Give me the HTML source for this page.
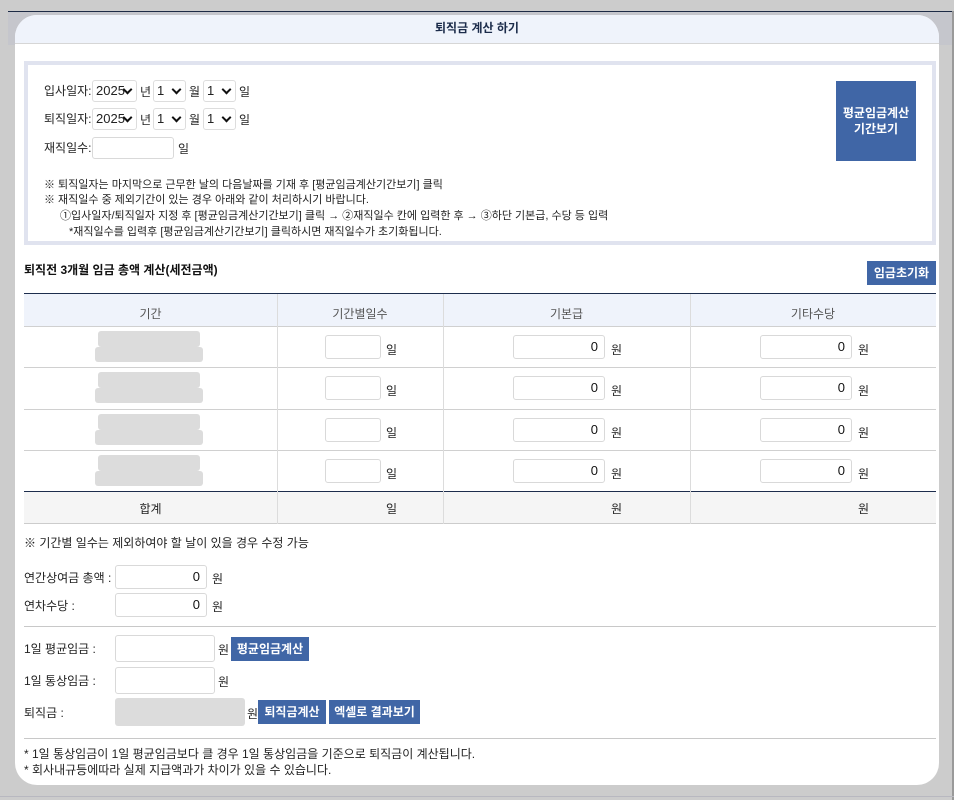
<!DOCTYPE html>
<html><head><meta charset="utf-8">
<style>
*{margin:0;padding:0;box-sizing:border-box}
body{width:954px;height:800px;background:#cccccc;position:relative;overflow:hidden;font-family:"Liberation Sans","Noto Sans CJK KR","NanumGothic",sans-serif;font-size:12px;color:#222}
.a{position:absolute;white-space:nowrap}
.inp{position:absolute;background:#fff;border:1px solid #d9d9d9;border-radius:3px;text-align:right;padding-right:6px;font-size:13px;color:#111}
.btn{position:absolute;background:#4066a6;color:#fff;font-weight:bold;font-size:12px;text-align:center}
.sel{position:absolute;background:#fff;border:1px solid #ddd;border-radius:3px;font-size:13px;height:22px;line-height:20px;padding-left:3px}
.sel:after{content:"";position:absolute;right:5px;top:5px;width:5px;height:5px;border-right:2px solid #111;border-bottom:2px solid #111;transform:rotate(45deg)}
.blur{position:absolute;background:#dcdcdc;border-radius:3px}
.vl{position:absolute;width:1px;background:#dcdcdc}
.hl{position:absolute;height:1px;background:#d0d0d0}
.note{font-size:11px;color:#222}
</style></head><body>
<div class="a" style="left:8px;top:11px;width:944px;height:1px;background:#1d2b45"></div>
<div class="a" style="left:8px;top:12px;width:944px;height:33px;background:#c5c6cc"></div>
<div class="a" style="left:952px;top:11px;width:2px;height:789px;background:#9a9a9a"></div>
<div class="a" style="left:0;top:796px;width:954px;height:1px;background:#b8b8c0"></div>
<div class="a" style="left:15px;top:15px;width:924px;height:770px;background:#fff;border-radius:22px;overflow:hidden">
  <div class="a" style="left:0;top:0;width:924px;height:29px;background:#eff3fb;border-bottom:1px solid #d6d6d6"></div>
</div>
<div class="a" style="left:0;top:20px;width:954px;text-align:center;font-weight:bold;font-size:12px;color:#1b2b4a;line-height:16px">퇴직금 계산 하기</div>

<div class="a" style="left:24px;top:61px;width:912px;height:184px;border:4px solid #e0e3ef;background:#fff"></div>
<div class="a" style="left:44px;top:83px;line-height:16px">입사일자:</div>
<div class="sel" style="left:92px;top:80px;width:45px">2025</div><div class="a" style="left:140px;top:83px">년</div>
<div class="sel" style="left:153px;top:80px;width:33px">1</div><div class="a" style="left:189px;top:83px">월</div>
<div class="sel" style="left:203px;top:80px;width:33px">1</div><div class="a" style="left:239px;top:83px">일</div>
<div class="a" style="left:44px;top:111px;line-height:16px">퇴직일자:</div>
<div class="sel" style="left:92px;top:108px;width:45px">2025</div><div class="a" style="left:140px;top:111px">년</div>
<div class="sel" style="left:153px;top:108px;width:33px">1</div><div class="a" style="left:189px;top:111px">월</div>
<div class="sel" style="left:203px;top:108px;width:33px">1</div><div class="a" style="left:239px;top:111px">일</div>
<div class="a" style="left:44px;top:140px;line-height:16px">재직일수:</div>
<div class="inp" style="left:92px;top:137px;width:82px;height:22px"></div><div class="a" style="left:178px;top:140px">일</div>
<div class="a note" style="left:44px;top:177px;line-height:16px">※ 퇴직일자는 마지막으로 근무한 날의 다음날짜를 기재 후 [평균임금계산기간보기] 클릭</div>
<div class="a note" style="left:44px;top:192px;line-height:16px">※ 재직일수 중 제외기간이 있는 경우 아래와 같이 처리하시기 바랍니다.</div>
<div class="a note" style="left:60px;top:208px;line-height:16px">①입사일자/퇴직일자 지정 후 [평균임금계산기간보기] 클릭 → ②재직일수 칸에 입력한 후 → ③하단 기본급, 수당 등 입력</div>
<div class="a note" style="left:69px;top:224px;line-height:16px">*재직일수를 입력후 [평균임금계산기간보기] 클릭하시면 재직일수가 초기화됩니다.</div>
<div class="btn" style="left:836px;top:81px;width:80px;height:80px;padding-top:24px;line-height:16px">평균임금계산<br>기간보기</div>

<div class="a" style="left:24px;top:262px;font-weight:bold;font-size:12px;line-height:16px;color:#111">퇴직전 3개월 임금 총액 계산(세전금액)</div>
<div class="btn" style="left:867px;top:261px;width:69px;height:24px;line-height:24px">임금초기화</div>

<div class="a" style="left:24px;top:293px;width:912px;height:33px;background:#eff3fb;border-top:1px solid #1d2d4d"></div>
<div class="a" style="left:24px;top:305px;width:253px;text-align:center;color:#555">기간</div>
<div class="a" style="left:277px;top:305px;width:166px;text-align:center;color:#555">기간별일수</div>
<div class="a" style="left:443px;top:305px;width:247px;text-align:center;color:#555">기본급</div>
<div class="a" style="left:690px;top:305px;width:246px;text-align:center;color:#555">기타수당</div>
<div class="hl" style="left:24px;top:326px;width:912px"></div>
<div class="hl" style="left:24px;top:367px;width:912px"></div>
<div class="hl" style="left:24px;top:409px;width:912px"></div>
<div class="hl" style="left:24px;top:450px;width:912px"></div>
<div class="a" style="left:24px;top:491px;width:912px;height:33px;background:#f5f5f5;border-top:1px solid #1d2d4d;border-bottom:1px solid #ccc"></div>
<div class="vl" style="left:277px;top:294px;height:230px"></div>
<div class="vl" style="left:443px;top:294px;height:230px"></div>
<div class="vl" style="left:690px;top:294px;height:230px"></div>

<div class="blur" style="left:98px;top:331px;width:102px;height:16px"></div><div class="blur" style="left:95px;top:347px;width:108px;height:15px"></div>
<div class="blur" style="left:98px;top:372px;width:102px;height:16px"></div><div class="blur" style="left:95px;top:388px;width:108px;height:15px"></div>
<div class="blur" style="left:98px;top:414px;width:102px;height:16px"></div><div class="blur" style="left:95px;top:430px;width:108px;height:15px"></div>
<div class="blur" style="left:98px;top:455px;width:102px;height:16px"></div><div class="blur" style="left:95px;top:471px;width:108px;height:15px"></div>

<div class="inp" style="left:325px;top:335px;width:56px;height:24px"></div><div class="a" style="left:386px;top:341px">일</div>
<div class="inp" style="left:513px;top:335px;width:92px;height:24px;line-height:22px">0</div><div class="a" style="left:611px;top:341px">원</div>
<div class="inp" style="left:760px;top:335px;width:92px;height:24px;line-height:22px">0</div><div class="a" style="left:858px;top:341px">원</div>
<div class="inp" style="left:325px;top:376px;width:56px;height:24px"></div><div class="a" style="left:386px;top:382px">일</div>
<div class="inp" style="left:513px;top:376px;width:92px;height:24px;line-height:22px">0</div><div class="a" style="left:611px;top:382px">원</div>
<div class="inp" style="left:760px;top:376px;width:92px;height:24px;line-height:22px">0</div><div class="a" style="left:858px;top:382px">원</div>
<div class="inp" style="left:325px;top:418px;width:56px;height:24px"></div><div class="a" style="left:386px;top:424px">일</div>
<div class="inp" style="left:513px;top:418px;width:92px;height:24px;line-height:22px">0</div><div class="a" style="left:611px;top:424px">원</div>
<div class="inp" style="left:760px;top:418px;width:92px;height:24px;line-height:22px">0</div><div class="a" style="left:858px;top:424px">원</div>
<div class="inp" style="left:325px;top:459px;width:56px;height:24px"></div><div class="a" style="left:386px;top:465px">일</div>
<div class="inp" style="left:513px;top:459px;width:92px;height:24px;line-height:22px">0</div><div class="a" style="left:611px;top:465px">원</div>
<div class="inp" style="left:760px;top:459px;width:92px;height:24px;line-height:22px">0</div><div class="a" style="left:858px;top:465px">원</div>

<div class="a" style="left:24px;top:500px;width:253px;text-align:center">합계</div>
<div class="a" style="left:386px;top:500px">일</div>
<div class="a" style="left:611px;top:500px">원</div>
<div class="a" style="left:858px;top:500px">원</div>

<div class="a" style="left:24px;top:535px;line-height:16px">※ 기간별 일수는 제외하여야 할 날이 있을 경우 수정 가능</div>
<div class="a" style="left:24px;top:570px;line-height:16px">연간상여금 총액 :</div>
<div class="inp" style="left:115px;top:565px;width:92px;height:24px;line-height:22px">0</div><div class="a" style="left:212px;top:570px">원</div>
<div class="a" style="left:24px;top:598px;line-height:16px">연차수당 :</div>
<div class="inp" style="left:115px;top:593px;width:92px;height:24px;line-height:22px">0</div><div class="a" style="left:212px;top:598px">원</div>
<div class="hl" style="left:24px;top:626px;width:912px;background:#c8c8c8"></div>
<div class="a" style="left:24px;top:641px;line-height:16px">1일 평균임금 :</div>
<div class="inp" style="left:115px;top:635px;width:100px;height:27px"></div><div class="a" style="left:218px;top:641px">원</div>
<div class="btn" style="left:231px;top:637px;width:78px;height:24px;line-height:24px">평균임금계산</div>
<div class="a" style="left:24px;top:673px;line-height:16px">1일 통상임금 :</div>
<div class="inp" style="left:115px;top:667px;width:100px;height:27px"></div><div class="a" style="left:218px;top:673px">원</div>
<div class="a" style="left:24px;top:705px;line-height:16px">퇴직금 :</div>
<div class="a" style="left:115px;top:698px;width:130px;height:28px;background:#dcdcdc;border-radius:3px"></div><div class="a" style="left:247px;top:705px">원</div>
<div class="btn" style="left:258px;top:700px;width:68px;height:24px;line-height:24px">퇴직금계산</div>
<div class="btn" style="left:329px;top:700px;width:91px;height:24px;line-height:24px">엑셀로 결과보기</div>
<div class="hl" style="left:24px;top:738px;width:912px;background:#c8c8c8"></div>
<div class="a" style="left:24px;top:746px;line-height:16px">* 1일 통상임금이 1일 평균임금보다 클 경우 1일 통상임금을 기준으로 퇴직금이 계산됩니다.</div>
<div class="a" style="left:24px;top:762px;line-height:16px">* 회사내규등에따라 실제 지급액과가 차이가 있을 수 있습니다.</div>
</body></html>
